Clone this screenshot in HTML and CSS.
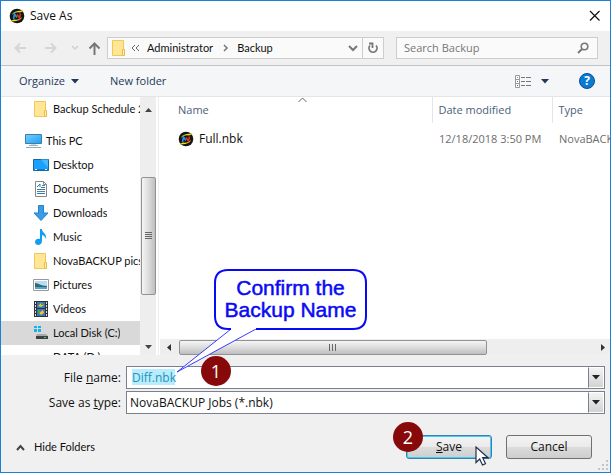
FILE: index.html
```html
<!DOCTYPE html>
<html lang="en">
<head>
<meta charset="utf-8">
<title>Save As</title>
<link rel="stylesheet" href="styles.css">
</head>
<body>
<svg class="defs" aria-hidden="true">
  <symbol id="folder" viewBox="0 0 14 16"><path d="M.5.5h11v15H.5z" fill="#ffe596" stroke="#eec956"/><path d="M10.500 9.500h2v6h-2z" fill="#fff0b5" stroke="#e8bd45"/></symbol>
  <symbol id="nova" viewBox="0 0 16 16"><circle cx="8" cy="8" r="7.300" fill="#151515"/><path d="M3 7C4 3.500 9 2.500 15.500 2.500L11 4.500C7 4 5 5 3 7zM13 9c-1 3.500-6 4.500-12.500 4.500L5 11.500c4 .5 6-.5 8-2.500z" fill="#f2df1b"/><path d="M4.500 11l1-5 2.500 3.500" fill="none" stroke="#2393dd" stroke-width="1.600"/><path d="M8 6.500l2.500 3.500 1-4.500" fill="none" stroke="#dd3126" stroke-width="1.600"/></symbol>
  <linearGradient id="sky" x2="1" y2="1"><stop stop-color="#77ceff"/><stop offset="1" stop-color="#239ded"/></linearGradient>
</svg>
<main class="dialog">
  <header class="title">
    <svg width="16" height="16"><use href="#nova"/></svg>
    <h1>Save As</h1>
    <button class="plain close" aria-label="Close"><svg width="12" height="12"><path d="M1 1l9.500 9.500M10.500 1L1 10.500" stroke="#111" fill="none" stroke-width="1.200"/></svg></button>
  </header>

  <nav class="nav">
    <button class="plain" aria-label="Back"><svg width="14" height="12"><path d="M12 6H2M6 1.500L1.500 6 6 10.500" stroke="#d5d5d5" stroke-width="2" fill="none"/></svg></button>
    <button class="plain forward" aria-label="Forward"><svg width="14" height="12"><path d="M1 6h10M7 1.500L11.500 6 7 10.500" stroke="#d5d5d5" stroke-width="2" fill="none"/></svg></button>
    <button class="plain recent" aria-label="Recent locations"><svg width="8" height="6"><path d="M1 1l3 3 3-3" stroke="#d0d0d0" stroke-width="1.500" fill="none"/></svg></button>
    <button class="plain up" aria-label="Up"><svg width="13" height="13"><path d="M6.500 13V2M1.500 6.500l5-5 5 5" stroke="#777" stroke-width="2" fill="none"/></svg></button>
    <div class="address">
      <svg width="14" height="16"><use href="#folder"/></svg>
      <svg class="dbl" width="9" height="8"><path d="M4 1L1 4l3 3M8 1L5 4l3 3" stroke="#666" fill="none"/></svg>
      <a href="#">Administrator</a>
      <svg class="sep" width="6" height="8"><path d="M1 1l3 3-3 3" stroke="#777" stroke-width="1.500" fill="none"/></svg>
      <a href="#">Backup</a>
      <button class="plain drop" aria-label="Previous locations"><svg width="10" height="7"><path d="M1 1l4 4 4-4" stroke="#777" stroke-width="2" fill="none"/></svg></button>
      <button class="plain refresh" aria-label="Refresh"><svg width="12" height="12"><path d="M9 3.500A4 4 0 1 1 3 3.500M2 1.500h3.500V6" stroke="#777" stroke-width="1.800" fill="none"/></svg></button>
    </div>
    <label class="search"><input type="text" placeholder="Search Backup" aria-label="Search Backup"><svg width="12" height="12"><circle cx="7.500" cy="4.500" r="3.300" stroke="#777" stroke-width="1.600" fill="none"/><path d="M5 7l-4 4" stroke="#777" stroke-width="2"/></svg></label>
  </nav>

  <div class="toolbar">
    <button class="plain">Organize <svg width="8" height="5"><path d="M0 0h8L4 4.500z" fill="#1e395b"/></svg></button>
    <button class="plain new">New folder</button>
    <button class="plain view" aria-label="Change view"><svg width="17" height="13"><path d="M.5.5h4v12h-4zM.5 4.500h4M.5 8.500h4" fill="#fff" stroke="#999"/><path d="M2 2h1v1H2z" fill="#888"/><path d="M2 6h1v1H2z" fill="#168be8"/><path d="M2 10h1v1H2z" fill="#d22"/><path d="M6 2.500h4m1 0h5M6 6.500h4m1 0h5M6 10.500h4m1 0h5" stroke="#777"/></svg><svg width="8" height="5"><path d="M0 0h8L4 4.500z" fill="#1e395b"/></svg></button>
    <button class="help" aria-label="Help">?</button>
  </div>

  <div class="browser">
    <aside class="side">
      <ul class="tree">
        <li class="first"><svg width="16" height="16"><use href="#folder"/></svg><span>Backup Schedule 2</span></li>
        <li class="root"><svg width="17" height="16"><path d="M.5 1.500h16v9H.5z" fill="url(#sky)" stroke="#387fae"/><path d="M6 12h5M4 12.500h9" stroke="#9bafbd"/><path d="M1 14.500h15" stroke="#8fa9b9"/></svg><span>This PC</span></li>
        <li><svg width="16" height="16"><path d="M.5 2.500h15v11H.5z" fill="#18a1ff" stroke="#17679f"/><path d="M8 2.500h7v8z" fill="#4ab8ff"/><path d="M1 12.500h14" stroke="#087fd1"/><path d="M2 12.500h2m8 0h2" stroke="#fff"/></svg><span>Desktop</span></li>
        <li><svg width="16" height="16"><path d="M2.500.5h8l3 3v12h-11z" fill="#fff" stroke="#888"/><path d="M10.500.5v3h3" fill="none" stroke="#888"/><path d="M4 6l3-3v3M8 6.500h4M4 8.500h8M4 12.500h8" stroke="#247fc0" fill="none"/><path d="M4 10.500h8M9 4.500h3" stroke="#777"/></svg><span>Documents</span></li>
        <li><svg width="16" height="16"><path d="M5.500.5h5V8h4.500L8 15.500 1 8h4.500z" fill="#399ce8" stroke="#2581c5"/></svg><span>Downloads</span></li>
        <li><svg width="16" height="16"><path d="M7 0h2c0 4 5 4 4 10-1-3-3-4-4-4v6c0 5-7 5-7 1 0-3 3-4 5-3z" fill="#129ff3"/></svg><span>Music</span></li>
        <li><svg width="16" height="16"><use href="#folder"/></svg><span>NovaBACKUP pics</span></li>
        <li><svg width="16" height="16"><path d="M.5 2.500h15v11H.5z" fill="#fff" stroke="#999"/><path d="M2 4h12v8H2z" fill="#b8dcf5"/><path d="M2 6c4 0 5 3 12 3v3H2z" fill="#2d6c69"/><path d="M2 10h12v2H2z" fill="#5a9fd2"/></svg><span>Pictures</span></li>
        <li><svg width="16" height="16"><path d="M1 0h14v16H1z" fill="#333"/><path d="M4 1h8v6H4zM4 8h8v7H4z" fill="#3678c5"/><path d="M2.500 1v14M13.500 1v14" stroke="#ddd" stroke-dasharray="2 1"/><path d="M5 5l3-3 3 2-3 2zM6 12l4-3 1 3-3 2z" fill="#f4c427"/><path d="M5 9h2v3H5zM8 2h2v2H8z" fill="#43a653"/></svg><span>Videos</span></li>
        <li class="current"><svg width="16" height="16"><path d="M1 1h3v2H1zM5 1h3v2H5zM1 4h3v3H1zM5 4h3v3H5z" fill="#13b3ed"/><path d="M4 9h9l2 2H3z" fill="#aaa"/><path d="M3 11h12v3H3z" fill="#3d4146"/><path d="M11 12.500h2" stroke="#39dc61"/></svg><span>Local Disk (C:)</span></li>
        <li><svg width="16" height="16"></svg><span>DATA (D:)</span></li>
      </ul>
      <div class="vbar" aria-hidden="true">
        <svg width="7" height="4"><path d="M0 4l3.500-4L7 4z" fill="#444"/></svg>
        <div class="vthumb"><svg width="7" height="8"><path d="M0 .5h7M0 2.500h7M0 4.500h7M0 6.500h7" stroke="#666"/></svg></div>
        <svg width="7" height="4"><path d="M0 0h7L3.500 4z" fill="#444"/></svg>
      </div>
    </aside>
    <section class="files">
      <table>
        <colgroup><col class="c-name"><col class="c-date"><col></colgroup>
        <thead><tr><th>Name<svg class="sort" width="9" height="6"><path d="M.5 5l4-4 4 4" stroke="#666" fill="none"/></svg></th><th>Date modified</th><th>Type</th></tr></thead>
        <tbody><tr><td><span class="file"><svg width="16" height="16"><use href="#nova"/></svg>Full.nbk</span></td><td>12/18/2018 3:50 PM</td><td>NovaBACKUP Job</td></tr></tbody>
      </table>
      <div class="hbar" aria-hidden="true">
        <svg width="4" height="7"><path d="M4 0v7L0 3.500z" fill="#333"/></svg>
        <div class="hthumb"><svg width="8" height="7"><path d="M.5 0v7M3.500 0v7M6.500 0v7" stroke="#666"/></svg></div>
        <svg width="4" height="7"><path d="M0 0v7l4-3.500z" fill="#333"/></svg>
      </div>
    </section>
  </div>

  <form class="form">
    <label for="name">File <u>n</u>ame:</label>
    <div class="combo"><input id="name" type="text" value="Diff.nbk"><button type="button" aria-label="File name history"><svg width="8" height="5"><path d="M0 0h8L4 4.500z" fill="#222"/></svg></button></div>
    <label for="type">Save as <u>t</u>ype:</label>
    <div class="combo"><select id="type"><option>NovaBACKUP Jobs (*.nbk)</option></select><button type="button" aria-label="Show types"><svg width="8" height="5"><path d="M0 0h8L4 4.500z" fill="#222"/></svg></button></div>
  </form>
  <footer class="actions">
    <button class="plain hide"><svg width="9" height="7"><path d="M1 6l3.500-4L8 6" stroke="#444" stroke-width="2" fill="none"/></svg>Hide Folders</button>
    <button class="btn save"><u>S</u>ave</button>
    <button class="btn">Cancel</button>
  </footer>
  <svg class="grip" width="12" height="12"><path d="M8 0h2v2H8zM4 4h2v2H4zM8 4h2v2H8zM0 8h2v2H0zM4 8h2v2H4zM8 8h2v2H8z" fill="#c4c4c4"/></svg>

  <div class="callout">
    <svg width="196" height="106"><path d="M57 60L3 103 82 60" fill="#fff" stroke="#3b3bff"/><path d="M57 60H54Q41 60 41 47V14Q41 1 54 1H179Q192 1 192 14V47Q192 60 179 60H82" fill="#fff" stroke="#0909f5" stroke-width="2"/></svg>
    <p>Confirm the<br>Backup Name</p>
  </div>
  <span class="badge one">1</span>
  <span class="badge two">2</span>
  <svg class="cursor" width="14" height="21"><path d="M1 1v15.500l3.700-3.500 2.800 6 3-1.300-2.800-6H13z" fill="#fff" stroke="#222f4c" stroke-width="1.200"/></svg>
</main>
</body>
</html>
```
FILE: styles.css
```css
* { box-sizing: border-box; }
body { margin: 0; font: 12px/16px "Open Sans", "Noto Sans", sans-serif; color: #111; }
button, input, select { font: inherit; color: inherit; margin: 0; }
svg { display: block; flex: none; }
.defs { position: absolute; width: 0; height: 0; }
.plain { display: flex; align-items: center; border: 0; padding: 0; background: none; }
.dialog { position: relative; display: flex; flex-direction: column; height: 100vh; border: 1px solid #1c80d3; background: #f0f0f0; overflow: hidden; }

.title { display: flex; align-items: center; gap: 5px; height: 30px; padding: 0 9px 0 8px; background: #fff; }
.title h1 { flex: 1; margin: 0; font-size: 12px; font-weight: 400; }

.nav, .tree, .actions .hide { font-family: Lato, sans-serif; font-size: 11px; }
.toolbar, table { font-size: 11px; }

.nav { display: flex; align-items: center; height: 35px; padding: 0 12px 0 13px; border-bottom: 1px solid #bfc3c8; }
.forward { margin-left: 16px; }
.recent { margin-left: 13px; }
.up { margin-left: 9px; }
.address { display: flex; flex: 1; align-items: center; height: 22px; margin-left: 6px; padding-left: 4px; border: 1px solid #cdcdcd; background: #fafafa; }
.address a { color: inherit; text-decoration: none; }
.dbl { margin: 0 7px 0 5px; }
.sep { margin: 0 8px 0 10px; }
.drop { margin-left: auto; padding-right: 4px; }
.refresh { height: 20px; padding: 0 4px; border-left: 1px solid #cdcdcd; }
.search { display: flex; align-items: center; width: 202px; height: 22px; margin-left: 12px; padding: 0 8px 0 7px; border: 1px solid #cdcdcd; background: #fafafa; }
.search input { flex: 1; min-width: 0; padding: 0; border: 0; outline: 0; background: none; font-family: "Open Sans", sans-serif; }
.search input::placeholder { color: #777; }

.toolbar { display: flex; align-items: center; height: 31px; padding: 0 15px 0 18px; border-bottom: 1px solid #e3e5e8; background: #f5f6f8; color: #1e395b; }
.toolbar .plain { gap: 6px; }
.toolbar .new { margin-left: 31px; }
.toolbar .view { margin-left: auto; gap: 9px; }
.toolbar .help { width: 16px; height: 16px; margin-left: 30px; padding: 0; border: 1px solid #074e96; border-radius: 50%; background: #087bd5; color: #fff; font: 700 12px/14px "Open Sans", sans-serif; }

.browser { display: flex; flex: 1; min-height: 0; background: #fff; }
.side { display: flex; width: 158px; padding-right: 2px; border-right: 1px solid #eee; overflow: hidden; }
.tree { flex: 1; min-width: 0; margin: 0; padding: 0; list-style: none; overflow: hidden; }
.tree li { display: flex; align-items: center; gap: 4px; height: 24px; padding-left: 32px; white-space: nowrap; }
.tree li span { overflow: hidden; }
.tree .first { margin-bottom: 8px; }
.tree .root { padding-left: 24px; }
.tree .current { background: #d9d9d9; }
.vbar { display: flex; flex-direction: column; align-items: center; width: 16px; padding: 11px 0 6px; background: #eee; }
.vbar > :last-child { margin-top: auto; }
.vthumb { display: flex; align-items: center; justify-content: center; width: 15px; height: 118px; margin-top: 65px; border: 1px solid #929292; border-radius: 2px; background: linear-gradient(90deg, #f5f5f5, #dcdcdc 50%, #bebec0); }
.files { display: flex; flex: 1; flex-direction: column; justify-content: space-between; min-width: 0; padding-left: 1px; overflow: hidden; }
table { width: 100%; table-layout: fixed; border-collapse: collapse; }
.c-name { width: 272px; }
.c-date { width: 120px; }
th { position: relative; height: 26px; padding: 0 0 0 6px; border-left: 1px solid #e3e5e8; color: #4c607a; font-weight: 400; text-align: left; }
th:first-child { padding-left: 18px; border-left: 0; }
td { height: 32px; padding: 0 0 0 7px; color: #6d6d6d; white-space: nowrap; overflow: hidden; }
td:first-child { padding-left: 18px; color: #111; }
.sort { position: absolute; top: 0; left: 138px; }
.file { display: flex; align-items: center; gap: 5px; font-size: 12px; }
.hbar { display: flex; align-items: center; justify-content: space-between; height: 16px; padding: 0 5px 0 7px; background: #eee; }
.hthumb { display: flex; align-items: center; justify-content: center; width: 308px; height: 15px; margin-right: auto; margin-left: 8px; border: 1px solid #929292; border-radius: 2px; background: linear-gradient(#f5f5f5, #dcdcdc 50%, #bebec0); }

.form { display: grid; grid-template-columns: 120px 1fr; gap: 2px 5px; padding: 11px 5px 0 0; }
.form label { align-self: center; text-align: right; }
.combo { display: flex; height: 23px; border: 1px solid #7a808c; background: #fff; }
.combo input, .combo select { flex: 1; min-width: 0; padding: 0 3px; border: 0; outline: 0; border-radius: 0; appearance: none; background: #fff; }
.combo input { padding: 0 5px; color: #2493ba; background: linear-gradient(#b9ecff, #b9ecff) 5px 2px / 43px 16px no-repeat; }
.combo button { display: flex; align-items: center; justify-content: center; width: 16px; padding: 0; border: 1px solid #fff; border-left-color: #7a808c; background: linear-gradient(#f3f3f3, #d2d2d2); }

.actions { display: flex; align-items: center; gap: 14px; padding: 21px 18px 13px 15px; }
.hide { gap: 9px; margin-right: auto; }
.btn { width: 86px; height: 24px; padding: 0; border: 1px solid #707070; border-radius: 3px; background: linear-gradient(#f3f3f3, #ebebeb 49%, #dcdcdc 50%, #cecece); }
.save { border: 1px solid #3c7fb1; box-shadow: inset 0 0 0 1px #3fcdf5; }
.grip { position: absolute; right: 0; bottom: 0; }

.callout { position: absolute; top: 268px; left: 173px; }
.callout p { position: absolute; top: 8px; left: 41px; width: 151px; margin: 0; color: #0909f5; font: 21px/22px "Liberation Sans", sans-serif; text-align: center; white-space: nowrap; -webkit-text-stroke: 0.5px #0909f5; }
.badge { position: absolute; width: 30px; height: 30px; border-radius: 50%; background: #880909; color: #fff; font: 18px/30px "Open Sans", sans-serif; text-align: center; }
.one { top: 355px; left: 200px; }
.two { top: 421px; left: 392px; }
.cursor { position: absolute; top: 445px; left: 474px; }
```
